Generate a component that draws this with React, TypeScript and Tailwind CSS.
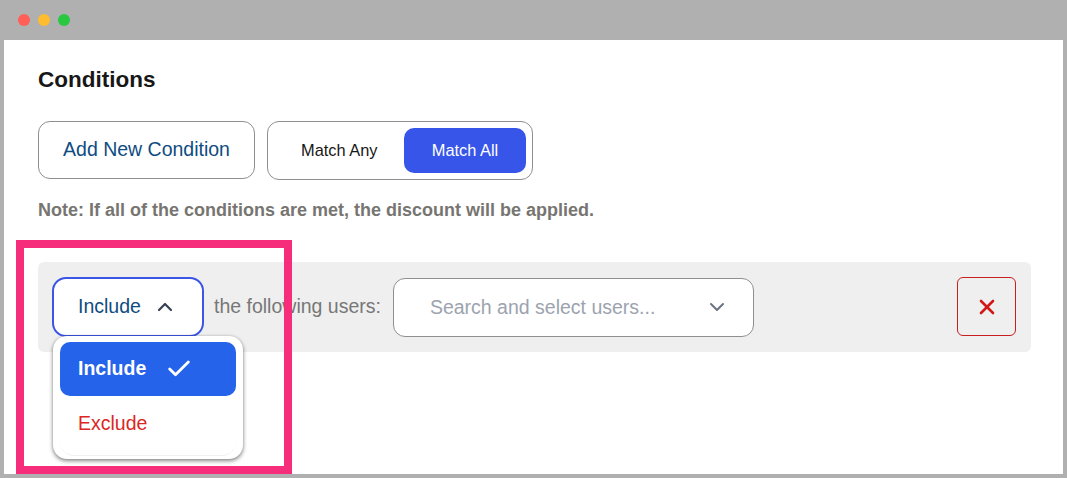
import { Check, ChevronDown, ChevronUp, X } from "lucide-react";

export default function App() {
	return (
		<div className="relative h-[478px] w-[1067px] overflow-hidden bg-[#b0b0b0] px-1 pb-1 font-['Liberation_Sans',sans-serif]">
			{/* window title bar */}
			<div className="-mx-1 flex h-10 items-center gap-2 px-[18px]">
				<span className="h-3 w-3 rounded-full bg-[#ff5f57]" />
				<span className="h-3 w-3 rounded-full bg-[#febc2e]" />
				<span className="h-3 w-3 rounded-full bg-[#28c840]" />
			</div>

			<div className="h-[434px] bg-white pl-[34px] pr-8 pt-[26px]">
				<h2 className="text-[22.5px] font-bold leading-7 text-[#171717]">Conditions</h2>

				<div className="mt-[27px] flex items-start gap-3">
					<button className="h-[58px] w-[217px] rounded-xl border border-[#8f8f8f] text-[19.5px] text-[#0f4c81]">
						Add New Condition
					</button>
					<div className="flex h-[59px] w-[266px] items-center justify-between rounded-xl border border-[#8f8f8f] pl-[33px] pr-1.5">
						<span className="text-[16.4px] text-[#171717]">Match Any</span>
						<span className="flex h-[45px] w-[122px] items-center justify-center rounded-[10px] bg-[#3755e8] text-[16.4px] text-white">
							Match All
						</span>
					</div>
				</div>

				<p className="mt-[19px] text-lg font-bold leading-[22px] text-[#777571]">
					Note: If all of the conditions are met, the discount will be applied.
				</p>

				<div className="mt-[41px] flex h-[90px] w-[993px] items-center rounded-md bg-[#efefef] pl-3.5 pr-[15px]">
					<div className="relative self-start pt-[15px]">
						<button className="flex h-[60px] w-[152px] items-center gap-3 rounded-[14px] border-[2.5px] border-[#3b55e6] bg-white pl-6 text-[19.5px] text-[#0f4c81]">
							Include
							<ChevronUp className="h-6 w-6 text-[#374151]" strokeWidth={2.2} />
						</button>
						<div className="absolute left-px top-[74px] z-10 h-[123px] w-[190px] rounded-[14px] bg-white px-[7px] pt-1.5 shadow-[0_2px_4px_rgba(0,0,0,0.45),0_0_3px_rgba(0,0,0,0.15)]">
							<div className="flex h-[54px] items-center gap-[19px] rounded-[10px] bg-[#2563eb] pl-[18px] text-[19.5px] font-bold text-white">
								Include
								<Check className="h-7 w-7" strokeWidth={2.4} />
							</div>
							<div className="mt-[13px] h-[47px] rounded-[14px] border-b border-[#f0f0f0] pl-[18px] text-[19.5px] leading-7 text-[#dc2626]">
								Exclude
							</div>
						</div>
					</div>
					<span className="ml-2.5 text-[19.5px] text-[#777777]">the following users:</span>
					<div className="ml-3 flex h-[59px] w-[361px] items-center justify-between rounded-xl border border-[#8f8f8f] bg-white pl-9 pr-6">
						<span className="pt-0.5 text-[19.5px] text-[#9ca3af]">Search and select users...</span>
						<ChevronDown className="h-6 w-6 text-[#6b7280]" strokeWidth={2} />
					</div>
					<button className="ml-auto mt-[15px] flex h-[59px] w-[59px] items-center justify-center self-start rounded-md border border-[#c81e1e] text-[#d01818]">
						<X className="h-6 w-6" strokeWidth={2.6} />
					</button>
				</div>
			</div>

			{/* pink highlight drawn over the screenshot */}
			<div className="pointer-events-none absolute left-4 top-[240px] z-20 h-[234px] w-[276px] border-8 border-[#f52d7a]" />
		</div>
	);
}
